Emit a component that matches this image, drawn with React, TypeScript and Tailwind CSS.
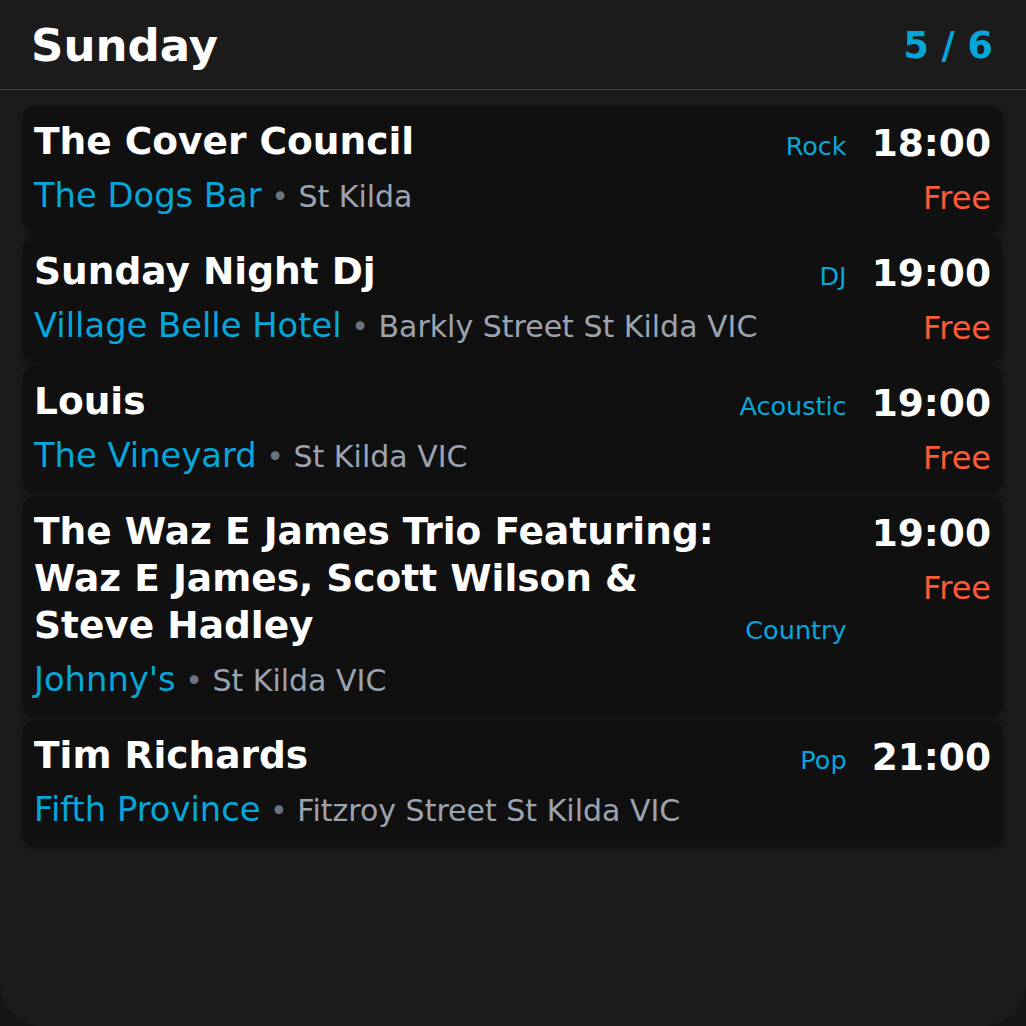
import React from 'react';

type Gig = {
    title: string;
    venue: string;
    place: string;
    genre: string;
    time: string;
    price?: string;
};

const gigs: Gig[] = [
    {title: 'The Cover Council', venue: 'The Dogs Bar', place: 'St Kilda', genre: 'Rock', time: '18:00', price: 'Free'},
    {title: 'Sunday Night Dj', venue: 'Village Belle Hotel', place: 'Barkly Street St Kilda VIC', genre: 'DJ', time: '19:00', price: 'Free'},
    {title: 'Louis', venue: 'The Vineyard', place: 'St Kilda VIC', genre: 'Acoustic', time: '19:00', price: 'Free'},
    {
        title: 'The Waz E James Trio Featuring: Waz E James, Scott Wilson & Steve Hadley',
        venue: "Johnny's",
        place: 'St Kilda VIC',
        genre: 'Country',
        time: '19:00',
        price: 'Free'
    },
    {title: 'Tim Richards', venue: 'Fifth Province', place: 'Fitzroy Street St Kilda VIC', genre: 'Pop', time: '21:00'},
];

function GigCard({gig}: { gig: Gig }) {
    return (
        <div className="flex rounded-[13px] bg-[#101010] py-3 pl-[11px] pr-3 shadow-[0_2px_6px_rgba(0,0,0,0.35)]">
            <div className="flex min-w-0 flex-1 flex-col">
                <div className="flex items-end gap-4">
                    <h2 className="min-w-0 flex-1 text-[37.5px] font-bold leading-[47px] text-white">{gig.title}</h2>
                    <span className="text-[25.5px] leading-[38px] text-[#06a6da]">{gig.genre}</span>
                </div>
                <div className="mt-[5px] whitespace-nowrap text-[33.75px] leading-[51px]">
                    <span className="text-[#06a6da]">{gig.venue}</span>
                    <span className="text-[30px] leading-none text-[#6b7280]"> • </span>
                    <span className="text-[30px] leading-none text-[#9ca3af]">{gig.place}</span>
                </div>
            </div>
            <div className="ml-[25px] flex flex-col items-end pt-[2px]">
                <span className="text-[37.5px] font-bold leading-[47px] text-white">{gig.time}</span>
                {gig.price && (
                    <span className="mt-[11px] text-[32px] leading-[40px] text-[#ff5a36]">{gig.price}</span>
                )}
            </div>
        </div>
    );
}

function App() {
    return (
        <main className="h-[1026px] w-[1026px] overflow-hidden bg-[#151515] font-['DejaVu_Sans',sans-serif]">
            <div className="flex h-full flex-col rounded-b-[42px] bg-[#1b1b1b]">
                <header className="flex items-center justify-between border-b border-[#3a3f4a] pl-[31px] pr-[33px] pt-[18px] pb-[15px]">
                    <h1 className="text-[45px] font-bold leading-[56px] text-white">Sunday</h1>
                    <span className="text-[36.5px] font-bold leading-[46px] text-[#06a6da]">5 / 6</span>
                </header>
                <section className="flex flex-col gap-[3px] px-[23px] pt-[16px]">
                    {gigs.map((g) => (
                        <GigCard key={g.title} gig={g}/>
                    ))}
                </section>
            </div>
        </main>
    );
}

export default App;
